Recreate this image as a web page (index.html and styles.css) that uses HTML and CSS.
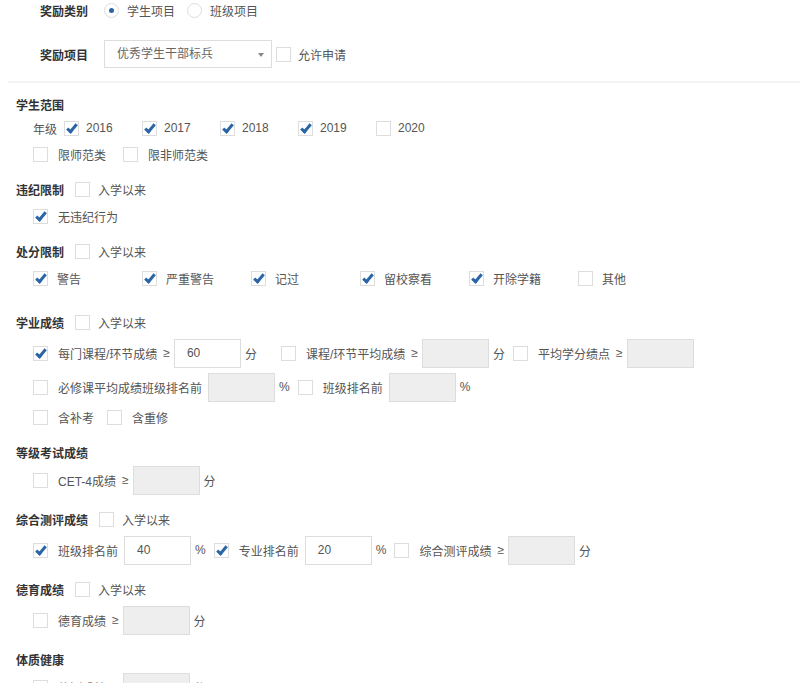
FILE: index.html
```html
<!DOCTYPE html>
<html>
  <head>
    <title>奖励条件设置</title>
    <meta name="viewport" content="width=device-width,initial-scale=1">
    <link rel="stylesheet" href="styles.css">
  </head>
<body>
  <div class="top">
    <div class="top-row">
      <span class="top-label">奖励类别</span>
      <span class="radio on"></span><span class="radio-text">学生项目</span>
      <span class="radio"></span><span class="radio-text">班级项目</span>
    </div>
    <div class="top-row tall">
      <span class="top-label">奖励项目</span>
      <div class="select">优秀学生干部标兵<span class="caret"></span></div>
      <span class="box near"></span><span class="txt">允许申请</span>
    </div>
  </div>
  <div class="divider"></div>

  <div class="section plain first">
    <div class="section-head">学生范围</div>
    <div class="row">
      <span class="grade">年级</span>
      <span class="year"><span class="box on"></span>2016</span>
      <span class="year"><span class="box on"></span>2017</span>
      <span class="year"><span class="box on"></span>2018</span>
      <span class="year"><span class="box on"></span>2019</span>
      <span class="year"><span class="box"></span>2020</span>
    </div>
    <div class="row">
      <span class="box"></span><span class="txt wide">限师范类</span>
      <span class="box"></span><span class="txt">限非师范类</span>
    </div>
  </div>

  <div class="section">
    <div class="section-head">违纪限制<span class="box head-box"></span><span class="txt">入学以来</span></div>
    <div class="row">
      <span class="box on"></span><span class="txt">无违纪行为</span>
    </div>
  </div>

  <div class="section">
    <div class="section-head">处分限制<span class="box head-box"></span><span class="txt">入学以来</span></div>
    <div class="row">
      <span class="penalty"><span class="box on"></span>警告</span>
      <span class="penalty"><span class="box on"></span>严重警告</span>
      <span class="penalty"><span class="box on"></span>记过</span>
      <span class="penalty"><span class="box on"></span>留校察看</span>
      <span class="penalty"><span class="box on"></span>开除学籍</span>
      <span class="penalty"><span class="box"></span>其他</span>
    </div>
  </div>

  <div class="section spaced">
    <div class="section-head">学业成绩<span class="box head-box"></span><span class="txt">入学以来</span></div>
    <div class="row input-row">
      <span class="box on"></span><span class="txt">每门课程/环节成绩</span><span class="ge">≥</span>
      <input class="field" value="60"><span class="unit extra">分</span>
      <span class="box"></span><span class="txt">课程/环节平均成绩</span><span class="ge">≥</span>
      <input class="field" disabled><span class="unit">分</span>
      <span class="box"></span><span class="txt">平均学分绩点</span><span class="ge">≥</span>
      <input class="field" disabled>
    </div>
    <div class="row input-row">
      <span class="box"></span><span class="txt">必修课平均成绩班级排名前</span>
      <input class="field" disabled><span class="unit">%</span>
      <span class="box"></span><span class="txt">班级排名前</span>
      <input class="field" disabled><span class="unit">%</span>
    </div>
    <div class="row">
      <span class="box"></span><span class="txt narrow">含补考</span>
      <span class="box"></span><span class="txt">含重修</span>
    </div>
  </div>

  <div class="section plain">
    <div class="section-head">等级考试成绩</div>
    <div class="row input-row">
      <span class="box"></span><span class="txt">CET-4成绩</span><span class="ge">≥</span>
      <input class="field" disabled><span class="unit">分</span>
    </div>
  </div>

  <div class="section">
    <div class="section-head">综合测评成绩<span class="box head-box"></span><span class="txt">入学以来</span></div>
    <div class="row input-row">
      <span class="box on"></span><span class="txt">班级排名前</span>
      <input class="field" value="40"><span class="unit">%</span>
      <span class="box on"></span><span class="txt">专业排名前</span>
      <input class="field" value="20"><span class="unit">%</span>
      <span class="box"></span><span class="txt">综合测评成绩</span><span class="ge">≥</span>
      <input class="field" disabled><span class="unit">分</span>
    </div>
  </div>

  <div class="section">
    <div class="section-head">德育成绩<span class="box head-box"></span><span class="txt">入学以来</span></div>
    <div class="row input-row">
      <span class="box"></span><span class="txt">德育成绩</span><span class="ge">≥</span>
      <input class="field" disabled><span class="unit">分</span>
    </div>
  </div>

  <div class="section plain">
    <div class="section-head">体质健康</div>
    <div class="row input-row">
      <span class="box"></span><span class="txt">体测成绩</span><span class="ge">≥</span>
      <input class="field" disabled><span class="unit">分</span>
    </div>
  </div>
</body>
</html>
```

FILE: styles.css
```css
html, body {
  margin: 0;
  background-color: #fff;
  font-family: "Liberation Sans", "Noto Sans CJK SC", sans-serif;
  font-size: 12px;
  color: #555;
}
.top {
  padding-left: 40px;
}
.top-row {
  display: flex;
  align-items: center;
  height: 21px;
}
.top-row.tall {
  height: 28px;
  margin-top: 19px;
}
.top-label {
  font-weight: 700;
  color: #333;
  margin-right: 16px;
}
.radio {
  position: relative;
  box-sizing: border-box;
  width: 15px;
  height: 15px;
  border: 1px solid #ddd;
  border-radius: 50%;
  margin-right: 8px;
}
.radio.on::after {
  content: '';
  position: absolute;
  left: 4px;
  top: 4px;
  width: 5px;
  height: 5px;
  border-radius: 50%;
  background-color: #2a66a6;
}
.radio-text {
  margin-right: 12px;
}
.select {
  position: relative;
  box-sizing: border-box;
  width: 168px;
  height: 28px;
  line-height: 26px;
  padding-left: 12px;
  border: 1px solid #ddd;
  color: #666;
  margin-right: 4px;
}
.caret {
  position: absolute;
  right: 7px;
  top: 12px;
  border-left: 3px solid transparent;
  border-right: 3px solid transparent;
  border-top: 4px solid #888;
}
.divider {
  height: 2px;
  margin: 13px 0 10px 8px;
  background-color: #f3f3f3;
}
.section {
  padding-left: 16px;
  margin-top: 8px;
}
.section.plain {
  margin-top: 11px;
}
.section.first {
  margin-top: 0;
}
.section.spaced {
  margin-top: 17px;
}
.section-head {
  display: flex;
  align-items: center;
  height: 28px;
  font-weight: 700;
  color: #333;
}
.section.plain .section-head {
  height: 22px;
}
.section-head .txt {
  font-weight: 400;
  color: #555;
}
.section-head .head-box {
  margin-left: 11px;
  margin-right: 8px;
}
.row {
  display: flex;
  align-items: center;
  height: 26px;
  padding-left: 17px;
}
.row.input-row {
  height: 34px;
}
.box {
  position: relative;
  flex: 0 0 auto;
  box-sizing: border-box;
  width: 15px;
  height: 15px;
  border: 1px solid #ddd;
  background-color: #fff;
  margin-right: 10px;
}
.box.near {
  margin-right: 7px;
}
.box.on::after {
  content: '';
  position: absolute;
  left: 4px;
  top: 0px;
  width: 3px;
  height: 8px;
  border: solid #2a66a6;
  border-width: 0 3px 3px 0;
  transform: rotate(40deg);
}
.txt {
  margin-right: 6px;
}
.txt.wide {
  margin-right: 17px;
}
.txt.narrow {
  margin-right: 13px;
}
.grade {
  margin-right: 7px;
}
.year {
  display: flex;
  align-items: center;
  width: 78px;
}
.year .box {
  margin-right: 7px;
}
.penalty {
  display: flex;
  align-items: center;
  width: 109px;
}
.penalty .box {
  margin-right: 9px;
}
.ge {
  margin-right: 4px;
}
.field {
  box-sizing: border-box;
  width: 67px;
  height: 29px;
  padding: 0 0 0 12px;
  border: 1px solid #ddd;
  border-radius: 0;
  outline: none;
  background-color: #fff;
  font-family: "Liberation Sans", "Noto Sans CJK SC", sans-serif;
  font-size: 12px;
  color: #555;
  margin-right: 4px;
}
.field:disabled {
  background-color: #eee;
}
.unit {
  margin-right: 8px;
}
.unit.extra {
  margin-right: 24px;
}
```
